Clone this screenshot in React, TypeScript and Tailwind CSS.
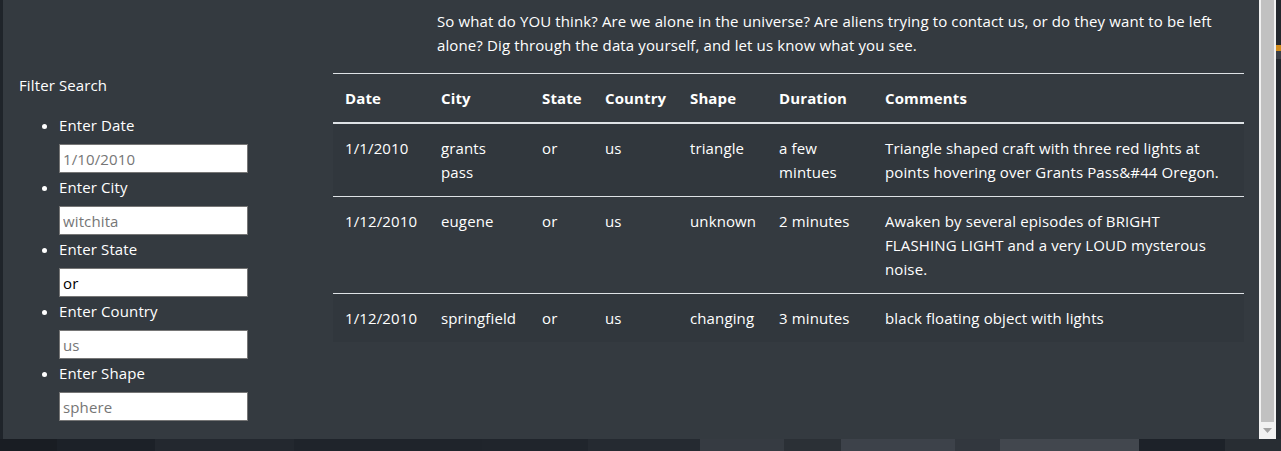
import React from "react";

const FONT = { fontFamily: '"Open Sans", "Noto Sans", sans-serif' };

const filters = [
  { label: "Enter Date", placeholder: "1/10/2010", value: "" },
  { label: "Enter City", placeholder: "witchita", value: "" },
  { label: "Enter State", placeholder: "", value: "or" },
  { label: "Enter Country", placeholder: "us", value: "" },
  { label: "Enter Shape", placeholder: "sphere", value: "" },
];

type Row = { date: string; city: React.ReactNode; state: string; country: string; shape: string; duration: React.ReactNode; comments: React.ReactNode };

const rows: Row[] = [
  {
    date: "1/1/2010",
    city: (<>grants<br />pass</>),
    state: "or",
    country: "us",
    shape: "triangle",
    duration: (<>a few<br />mintues</>),
    comments: (<>Triangle shaped craft with three red lights at<br />points hovering over Grants Pass&amp;#44 Oregon.</>),
  },
  {
    date: "1/12/2010",
    city: "eugene",
    state: "or",
    country: "us",
    shape: "unknown",
    duration: "2 minutes",
    comments: (<>Awaken by several episodes of BRIGHT<br />FLASHING LIGHT and a very LOUD mysterous<br />noise.</>),
  },
  {
    date: "1/12/2010",
    city: "springfield",
    state: "or",
    country: "us",
    shape: "changing",
    duration: "3 minutes",
    comments: "black floating object with lights",
  },
];

const bgStrips: [number, string][] = [
  [57, "#191d23"], [98, "#1c2128"], [139, "#23282f"], [188, "#1f242b"], [106, "#20252c"],
  [112, "#252a31"], [84, "#363b42"], [57, "#2b3036"], [114, "#3d424a"], [45, "#32373e"],
  [139, "#42474e"], [86, "#1d2229"], [56, "#282d33"],
];

export default function App() {
  return (
    <div className="w-[1281px] h-[451px] overflow-hidden bg-[#1d2228] flex flex-col" style={FONT}>
      <div className="flex h-[439px] shrink-0">
        <div className="w-[3px] bg-[#1f242a]" />
        <div className="w-[1256px] bg-[#343a40] text-white text-[15px] leading-[24px] tracking-[0.12px] flex pt-[9px]">
          {/* Left column */}
          <div className="w-[330px] shrink-0 pl-[16px] pt-[64px]">
            <div className="mb-[16px]">Filter Search</div>
            <ul className="list-disc pl-[40px]">
              {filters.map((f) => (
                <li key={f.label} className="pb-[2px]">
                  <div className="h-[24px]">{f.label}</div>
                  <input
                    className="mt-[7px] block w-[189px] h-[29px] bg-white border border-[#767676] pl-[3px] text-[15px] text-black placeholder:text-[#767676] outline-none"
                    style={FONT}
                    placeholder={f.placeholder}
                    defaultValue={f.value}
                  />
                </li>
              ))}
            </ul>
          </div>
          {/* Right column */}
          <div className="w-[911px] shrink-0">
            <p className="ml-[104px] mb-[16px] whitespace-nowrap">
              So what do YOU think? Are we alone in the universe? Are aliens trying to contact us, or do they want to be left
              <br />
              alone? Dig through the data yourself, and let us know what you see.
            </p>
            <table className="w-[911px] table-fixed border-collapse">
              <thead>
                <tr>
                  {[
                    ["Date", "w-[96px]"],
                    ["City", "w-[101px]"],
                    ["State", "w-[63px]"],
                    ["Country", "w-[85px]"],
                    ["Shape", "w-[89px]"],
                    ["Duration", "w-[106px]"],
                    ["Comments", "w-[371px]"],
                  ].map(([h, w]) => (
                    <th key={h} className={`${w} text-left font-bold px-[12px] py-[12px] border-t border-[#dee2e6] border-b-2 align-bottom`}>
                      {h}
                    </th>
                  ))}
                </tr>
              </thead>
              <tbody>
                {rows.map((r, i) => (
                  <tr key={i} className={i % 2 === 0 ? "bg-[#31373d]" : ""}>
                    {[r.date, r.city, r.state, r.country, r.shape, r.duration, r.comments].map((c, j) => (
                      <td key={j} className={`px-[12px] py-[12px] align-top whitespace-nowrap ${i > 0 ? "border-t border-[#dee2e6]" : ""}`}>
                        {c}
                      </td>
                    ))}
                  </tr>
                ))}
              </tbody>
            </table>
          </div>
        </div>
        {/* scrollbar */}
        <div className="w-[17px] bg-[#f1f1f1] flex flex-col items-center">
          <div className="w-[13px] h-[422px] bg-[#c1c1c1]" />
          <div className="flex-1 flex items-center justify-center">
            <svg width="9" height="5" viewBox="0 0 9 5"><path d="M0 0 H9 L4.5 5 Z" fill="#a3a3a3" /></svg>
          </div>
        </div>
        <div className="w-[5px] bg-[#23282e] flex flex-col">
          <div className="h-[45px]" />
          <div className="h-[6px] bg-[#d18c1c]" />
          <div className="h-[8px] bg-[#3a3f46]" />
        </div>
      </div>
      <div className="flex flex-1">
        {bgStrips.map(([w, c], i) => (
          <div key={i} style={{ width: w, background: c }} />
        ))}
      </div>
    </div>
  );
}
